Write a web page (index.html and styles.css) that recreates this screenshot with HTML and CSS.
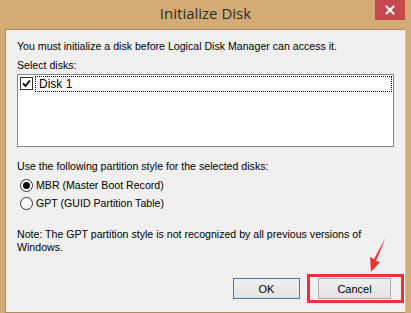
FILE: index.html
```html
<!DOCTYPE html>
<html lang="en">
<head>
    <meta charset="UTF-8">
    <title>Initialize Disk</title>
    <link rel="stylesheet" href="styles.css">
</head>
<body>
    <div class="window">
        <div class="titlebar">
            <span class="title">Initialize Disk</span>
            <div class="close">
                <svg width="12" height="10" viewBox="0 0 12 10"><path d="M2 1 L10 9 M10 1 L2 9" stroke="#fff" stroke-width="2.2"/></svg>
            </div>
        </div>

        <div class="dialog">
            <p class="line intro">You must initialize a disk before Logical Disk Manager can access it.</p>
            <p class="line">Select disks:</p>

            <div class="listbox">
                <div class="list-item">
                    <span class="check">
                        <svg width="9" height="9" viewBox="0 0 9 9"><path d="M1 4.5 L3.5 7 L8 1.5" fill="none" stroke="#000" stroke-width="1.8"/></svg>
                    </span>
                    <span class="item-label">Disk 1</span>
                </div>
            </div>

            <p class="line style-label">Use the following partition style for the selected disks:</p>

            <div class="radios">
                <label class="radio"><span class="dot checked"></span>MBR (Master Boot Record)</label>
                <label class="radio"><span class="dot"></span>GPT (GUID Partition Table)</label>
            </div>

            <p class="note">Note: The GPT partition style is not recognized by all previous versions of Windows.</p>

            <div class="buttons">
                <button class="btn btn-default">OK</button>
                <div class="highlight">
                    <button class="btn">Cancel</button>
                </div>
            </div>
        </div>

        <svg class="arrow" width="30" height="40" viewBox="0 0 30 40">
            <path d="M23 2 L13 26 L17 27 L8 37 L7 22 L11 24 Z" fill="#f3303a"/>
        </svg>
    </div>
</body>
</html>
```

FILE: styles.css
```css
body {
    margin: 0;
    background: #d3ab74;
    font-family: 'Liberation Sans', Arial, sans-serif;
    font-size: 10.6px;
    color: #000;
}

.window {
    position: relative;
    width: 411px;
    height: 313px;
    display: flex;
    flex-direction: column;
}

.titlebar {
    height: 29px;
    display: flex;
    justify-content: center;
    align-items: center;
    position: relative;
}

.title {
    font-family: 'Open Sans', 'Noto Sans', sans-serif;
    font-size: 15px;
    color: #2b2b2b;
    margin-top: -2px;
}

.close {
    position: absolute;
    top: 0;
    right: 6px;
    width: 30px;
    height: 20px;
    background: #c7494f;
    display: flex;
    justify-content: center;
    align-items: center;
}

.dialog {
    margin: 0 5px;
    height: 275px;
    background: #f0f0f0;
    border: 1px solid #a98d63;
    border-right-color: #d9c6a6;
    padding: 10px 11px 0;
    display: flex;
    flex-direction: column;
}

.line {
    margin: 0;
    line-height: 13px;
}

.intro {
    margin-bottom: 6px;
}

.listbox {
    margin-top: 2px;
    height: 69px;
    background: #fff;
    border: 1px solid #828790;
    padding: 1px 1px;
}

.list-item {
    display: flex;
    align-items: center;
    height: 16px;
}

.check {
    width: 11px;
    height: 11px;
    border: 1px solid #333;
    background: #fff;
    margin: 0 2px 0 1px;
    display: flex;
    justify-content: center;
    align-items: center;
}

.item-label {
    flex: 1;
    height: 14px;
    line-height: 14px;
    border: 1px dotted #000;
    padding-left: 3px;
    font-size: 12px;
}

.style-label {
    margin-top: 13px;
}

.radios {
    margin-top: 6px;
    display: flex;
    flex-direction: column;
    gap: 5px;
}

.radio {
    display: flex;
    align-items: center;
    gap: 3px;
    height: 13px;
    padding-left: 3px;
}

.dot {
    width: 11px;
    height: 11px;
    border: 1px solid #333;
    border-radius: 50%;
    background: #fff;
    display: flex;
    justify-content: center;
    align-items: center;
}

.dot.checked::after {
    content: "";
    width: 7px;
    height: 7px;
    border-radius: 50%;
    background: #111;
}

.note {
    margin: 18px 0 0;
    line-height: 13px;
    width: 350px;
}

.buttons {
    margin-top: auto;
    margin-bottom: 9px;
    display: flex;
    justify-content: flex-end;
    align-items: center;
    gap: 7px;
    margin-right: -10px;
}

.btn {
    width: 67px;
    height: 21px;
    font-family: 'Liberation Sans', Arial, sans-serif;
    font-size: 11px;
    color: #000;
    background: linear-gradient(#f0f0f0, #e3e3e3);
    border: 1px solid #acacac;
    padding: 0;
}

.btn-default {
    border-color: #3c7fb1;
}

.highlight {
    border: 3px solid #f3303a;
    padding: 1px 10px 1px 8px;
}

.highlight .btn {
    width: 73px;
}

.arrow {
    position: absolute;
    left: 363px;
    top: 235px;
}
```
